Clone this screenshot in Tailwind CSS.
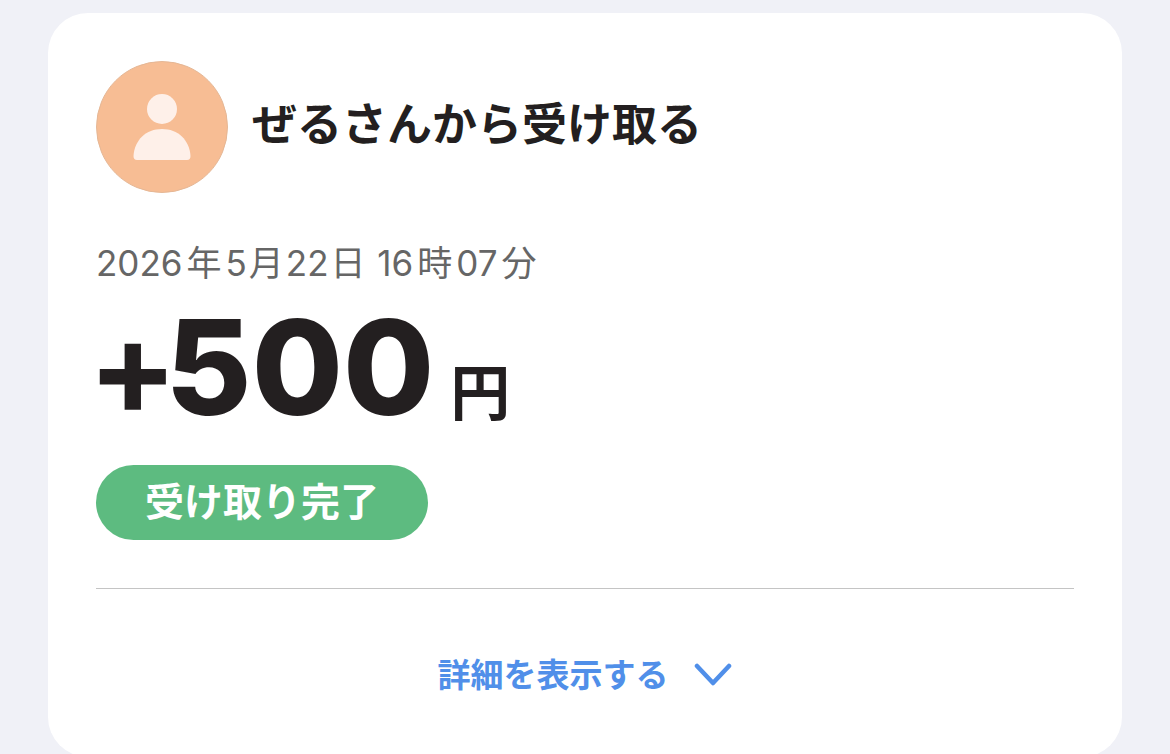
<!DOCTYPE html>
<html lang="ja">
<head>
<meta charset="utf-8">
<meta name="viewport" content="width=device-width, initial-scale=1">
<title>受け取り</title>
<script src="https://cdn.jsdelivr.net/npm/@tailwindcss/browser@4"></script>
</head>
<body class="min-h-screen overflow-hidden bg-[#f0f1f7] px-12 pt-[13px] font-['Inter','Noto_Sans_CJK_JP',sans-serif] text-[#231f20]">
<main class="rounded-[40px] bg-white px-12 pt-12 pb-13">
  <header class="flex items-center gap-6">
    <svg class="size-[132px] shrink-0" viewBox="0 0 132 132" aria-hidden="true">
      <circle cx="66" cy="66" r="65.5" fill="#f7bd94" stroke="#e5b795"/>
      <circle cx="66" cy="48" r="15" fill="#fef0e9"/>
      <path d="M37.500 95C38.500 79 50 68 66 68s27.500 11 28.500 27q0 4-3.500 4H41q-3.500 0-3.500-4Z" fill="#fef0e9"/>
    </svg>
    <h1 class="pb-1 text-[45px] leading-[60px] font-bold">ぜるさんから受け取る</h1>
  </header>
  <p class="mt-12 text-[35px] leading-[44px] text-[#666]">2026<span class="mx-1">年</span>5<span class="mx-0.5">月</span>22<span class="mx-0.5">日</span> 16<span class="mx-1">時</span>07<span class="mx-1">分</span></p>
  <p class="mt-4 flex items-baseline gap-4 font-bold"><span class="flex text-[132px] leading-[132px] font-extrabold"><span class="-mr-3 -ml-2 font-bold">+</span><span>500</span></span><span class="text-[60px] leading-[60px]">円</span></p>
  <p class="mt-8 flex h-[75px] w-fit items-center rounded-full bg-[#5dbb80] px-[49px] text-[39px] font-bold text-white">受け取り完了</p>
  <hr class="mt-12 border-[#c4c4c4]">
  <button type="button" class="mx-auto mt-14 flex items-center gap-6 text-[33px] leading-[60px] font-bold text-[#508fe9]">詳細を表示する
    <svg class="h-6 w-10" viewBox="0 0 40 24" fill="none" stroke="currentColor" stroke-width="4.5" stroke-linecap="round" stroke-linejoin="round" aria-hidden="true"><path d="M4 3l16 17L36 3"/></svg>
  </button>
</main>
</body>
</html>
